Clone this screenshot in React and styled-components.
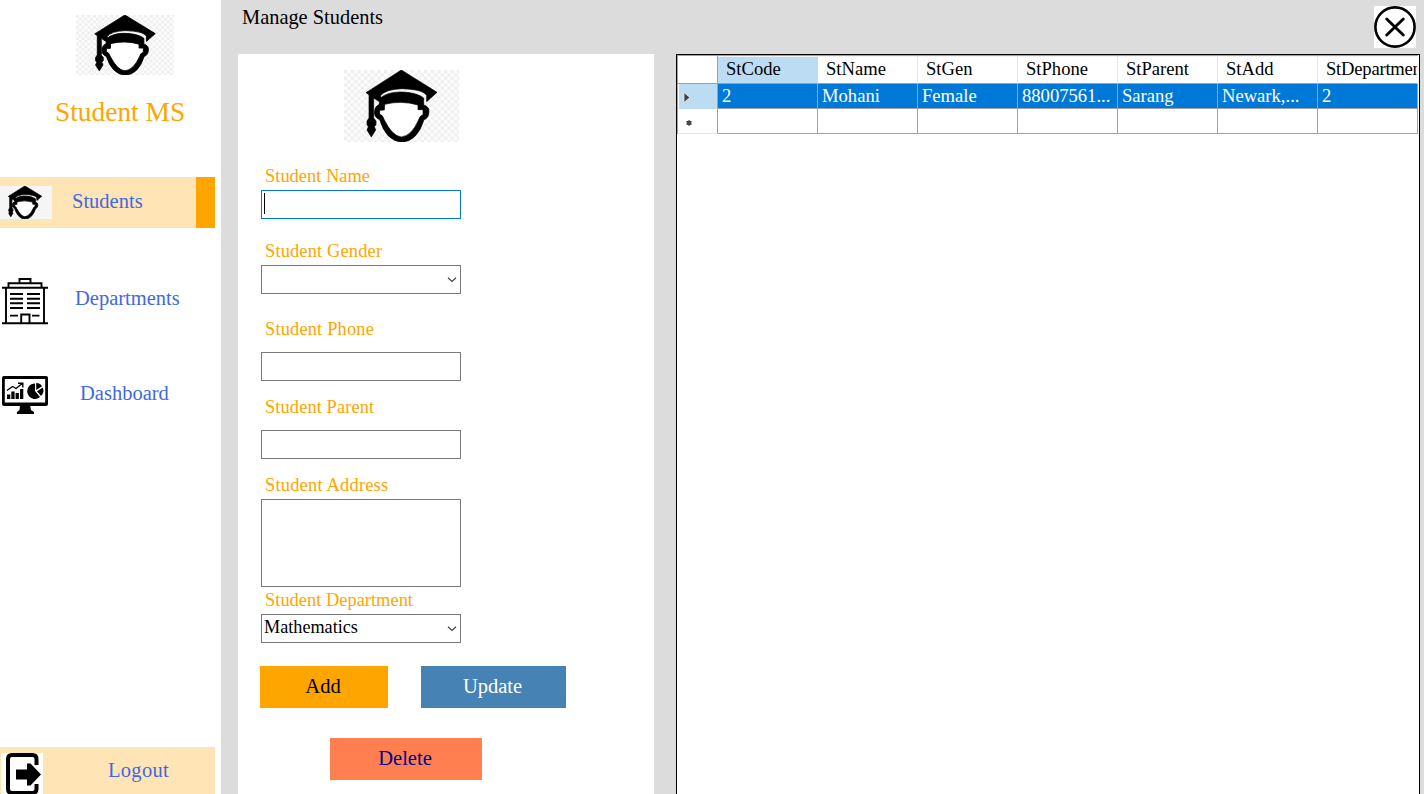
import React from 'react';
import styled, { createGlobalStyle } from 'styled-components';

const Global = createGlobalStyle`
  * { box-sizing: border-box; }
  html, body { margin: 0; padding: 0; overflow: hidden; }
  body { font-family: "Liberation Serif", "Times New Roman", serif; color: #000; }
`;

const Shell = styled.div`
  display: flex;
  width: 1424px;
  height: 794px;
  overflow: hidden;
  background: #dcdcdc;
`;

const Sidebar = styled.nav`
  display: flex;
  flex-direction: column;
  flex: none;
  width: 221px;
  background: #fff;
`;

const BrandIcon = styled.div`
  display: flex;
  margin: 15px 0 0 76px;
`;

const Brand = styled.h1`
  margin: 20px 0 0 55px;
  font-size: 27.4px;
  font-weight: 400;
  line-height: 34px;
  color: orange;
  white-space: nowrap;
`;

const NavItem = styled.a`
  display: flex;
  align-items: flex-start;
  width: 215px;
  height: ${p => p.$height}px;
  margin-top: ${p => p.$top}px;
  background: ${p => (p.$filled ? '#ffe4b5' : 'transparent')};
  border-right: ${p => (p.$active ? '19px solid orange' : 'none')};
`;

const NavIcon = styled.span`
  display: flex;
  flex: none;
  margin: ${p => p.$top}px 0 0 ${p => p.$left}px;
  width: ${p => p.$width}px;
`;

const NavText = styled.span`
  margin: ${p => p.$top}px 0 0 ${p => p.$gap}px;
  font-size: 20.5px;
  letter-spacing: ${p => p.$tracking || 0}px;
  line-height: 24px;
  color: #4169e1;
`;

const Spacer = styled.div`
  flex: 1;
`;

const Main = styled.main`
  display: flex;
  flex-direction: column;
  flex: 1;
  padding-left: 17px;
`;

const TopBar = styled.header`
  display: flex;
  justify-content: space-between;
  align-items: flex-start;
  flex: none;
  height: 54px;
  padding: 6px 8px 0 4px;
`;

const Title = styled.h2`
  margin: 0;
  font-size: 20.4px;
  font-weight: 400;
  line-height: 23px;
`;

const CloseButton = styled.button`
  display: flex;
  width: 42px;
  height: 42px;
  padding: 0;
  border: 0;
  background: #fff;
`;

const Content = styled.div`
  display: flex;
  flex: 1;
  gap: 22px;
`;

const FormPanel = styled.form`
  display: flex;
  flex-direction: column;
  width: 416px;
  flex: none;
  padding: 16px 0 0 23px;
  background: #fff;
`;

const FormIcon = styled.div`
  display: flex;
  margin: 0 0 4px 83px;
`;

const Label = styled.label`
  height: 20px;
  margin: ${p => p.$top}px 0 ${p => p.$gap}px 4px;
  font-size: 18.45px;
  letter-spacing: ${p => p.$tracking || 0}px;
  line-height: 20px;
  color: orange;
`;

const Field = styled.div`
  display: flex;
  justify-content: space-between;
  flex: none;
  width: 200px;
  height: ${p => p.$height || 29}px;
  padding: 2px 3px 2px 2px;
  border: 1px solid ${p => (p.$focus ? '#0078d7' : '#7a7a7a')};
  font-size: 18.2px;
  line-height: 20px;
`;

const Caret = styled.span`
  width: 1px;
  height: 21px;
  background: #000;
`;

const Buttons = styled.div`
  display: flex;
  gap: 33px;
  margin: ${p => p.$margin};
`;

const Button = styled.button`
  width: ${p => p.$width}px;
  height: 42px;
  padding: 0 2px 2px 0;
  border: 0;
  background: ${p => p.$bg};
  color: ${p => p.$color};
  font: 20.5px "Liberation Serif", "Times New Roman", serif;
`;

const GridPanel = styled.section`
  width: 744px;
  height: 760px;
  flex: none;
  border: 1px solid #000;
  background: #fff;
`;

const GridTable = styled.div`
  display: grid;
  grid-template-columns: 40px repeat(7, 100px);
  grid-template-rows: 28px 25px 25px;
  width: 741px;
  border-top: 1px solid #a0a0a0;
  border-left: 1px solid #a0a0a0;
  font-size: 18.6px;
`;

const HeadCell = styled.div`
  overflow: hidden;
  padding: 1px 0 0 8px;
  border-top: 1px solid #f4f4f4;
  border-right: ${p => (p.$last ? '1px solid #fff' : p.$selected ? '1px solid #bcdcf4' : '1px solid #e5e5e5')};
  border-bottom: 1px solid #a0a0a0;
  background: ${p => (p.$selected ? '#bcdcf4' : '#fff')};
  letter-spacing: ${p => (p.$last ? '-0.22px' : '0')};
  line-height: 22px;
  white-space: nowrap;
`;

const Corner = styled.div`
  border-right: 1px solid #a0a0a0;
  border-bottom: 1px solid #a0a0a0;
`;

const RowHead = styled.div`
  display: flex;
  padding: ${p => p.$pad};
  border-left: 1px solid #fff;
  border-right: 1px solid #a0a0a0;
  border-bottom: 1px solid ${p => (p.$selected ? '#bcdcf4' : '#e5e5e5')};
  background: ${p => (p.$selected ? '#bcdcf4' : '#fff')};
`;

const Cell = styled.div`
  padding: 1px 0 0 4px;
  border-right: 1px solid #a0a0a0;
  border-bottom: 1px solid #a0a0a0;
  background: ${p => (p.$selected ? '#0078d7' : '#fff')};
  color: #fff;
  line-height: 22px;
  white-space: nowrap;
`;

function GraduateIcon({ width, height, id, tile = 20, light, bold = 0, viewBox = '0 0 345 216' }) {
  const shade = light ? '#f1f1f1' : '#efefef';
  return (
    <svg width={width} height={height} viewBox={viewBox} preserveAspectRatio="none">
      <defs>
        <pattern id={id} width={tile} height={tile} patternUnits="userSpaceOnUse">
          <rect width={tile} height={tile} fill={light ? '#f9f9f9' : '#fdfdfd'} />
          <rect width={tile / 2} height={tile / 2} fill={shade} />
          <rect x={tile / 2} y={tile / 2} width={tile / 2} height={tile / 2} fill={shade} />
        </pattern>
      </defs>
      <rect width="345" height="216" fill={`url(#${id})`} />
      <path d="M122 103H222V119L237 120V134Q227 139 224 152Q205 200 172 201Q145 198 120 148Q117 136 107 133V121L122 120Z" fill="#fff" />
      <g stroke="#000" strokeWidth={bold}>
        <path d="M172 0L279 67L248 95V77Q240 58 174 56Q122 58 109 78L120 104L104 94L89 84V144L96 153V164L91 170L95 180L82 201L69 180L73 170L69 164V153L75 144V74L66 68Z" />
        <path d="M106 98L109 84Q132 65 174 66Q219 68 239 84V105Q256 110 255 125Q254 145 240 149Q219 216 172 216Q127 213 107 149Q91 143 91 125Q93 108 106 103ZM122 103L121 120L107 121V133Q116 134 120 148Q145 199 172 201Q203 198 224 149Q227 137 237 134V119H222V105Q172 90 122 103Z" fillRule="evenodd" />
      </g>
    </svg>
  );
}

function BuildingIcon() {
  return (
    <svg width="46" height="47" viewBox="0 0 46 47" fill="none" stroke="#000" strokeWidth="1.9">
      <path d="M17.5 5V1H28.5V5M6.5 9.5V5.3H39.5V9.5M0 9.8H46M4 10V45M42 10V45M0 45.3H46" />
      <path d="M8 16H21M25 16H38M8 20.7H21M25 20.7H38M8 25.3H21M25 25.3H38M8 30H21M25 30H38M8 37.6H16M30 37.6H37.5M19.2 45V36.5H27.5V45" />
    </svg>
  );
}

function DashboardIcon() {
  return (
    <svg width="46" height="38" viewBox="0 0 46 38">
      <rect x="0" y="0" width="46" height="30" rx="2" />
      <rect x="2.8" y="3" width="40.4" height="23.5" fill="#fff" />
      <path d="M18 29H28L29 34L32 36V38H15V36L17.5 34ZM5 18.5H8.3V23H5ZM9.3 15.5H12.6V23H9.3ZM13.6 17H16.9V23H13.6ZM18 13H21.3V23H18Z" />
      <path d="M5 14.5L10.5 10.5L14 12.5L20.3 7.5M16 7.3H20.8V11.5" fill="none" stroke="#000" strokeWidth="1.4" />
      <path d="M33 7.5V15L38 21A7.7 7.7 0 1 1 33 7.5Z" />
      <path d="M34.2 7A7 7 0 0 1 40 10.2L34.2 14ZM40.8 11.6A7.5 7.5 0 0 1 39 20L35 15.3Z" />
    </svg>
  );
}

function LogoutIcon() {
  return (
    <svg width="42" height="41" viewBox="0 0 42 41">
      <rect width="42" height="41" fill="#fff" />
      <path d="M35.5 12V6Q35.5 2 31.5 2H11Q7 2 7 6V36Q7 40 11 40H31.5Q35.5 40 35.5 36V31" fill="none" stroke="#000" strokeWidth="4" />
      <path d="M15 16.5H26V10.5H29.5L40 21.5L29.5 32.5H26V26.5H15Z" />
    </svg>
  );
}

function CloseIcon() {
  return (
    <svg width="42" height="42" viewBox="0 0 42 42" fill="none" stroke="#000">
      <circle cx="21" cy="21" r="19.6" strokeWidth="2.6" />
      <path d="M12.7 13L29.3 29M29.3 13L12.7 29" strokeWidth="2.9" strokeLinecap="round" />
    </svg>
  );
}

function ChevronIcon() {
  return (
    <svg width="10" height="23" viewBox="0 0 10 23" fill="none" stroke="#444" strokeWidth="1.2">
      <path d="M1 9.7L5 13.5L9 9.7" />
    </svg>
  );
}

const columns = ['StCode', 'StName', 'StGen', 'StPhone', 'StParent', 'StAdd', 'StDepartment'];
const student = ['2', 'Mohani', 'Female', '88007561...', 'Sarang', 'Newark,...', '2'];

export default function App() {
  return (
    <>
      <Global />
      <Shell>
        <Sidebar>
          <BrandIcon><GraduateIcon id="brand" width={98} height={60} bold={3} /></BrandIcon>
          <Brand>Student MS</Brand>
          <NavItem $height={51} $top={48} $filled $active>
            <NavIcon $top={9} $left={0} $width={52}><GraduateIcon id="nav" width={52} height={33} light bold={5} viewBox="13 0 332 216" /></NavIcon>
            <NavText $top={12} $gap={20}>Students</NavText>
          </NavItem>
          <NavItem $height={50} $top={50}>
            <NavIcon $top={0} $left={2} $width={46}><BuildingIcon /></NavIcon>
            <NavText $top={8} $gap={27}>Departments</NavText>
          </NavItem>
          <NavItem $height={42} $top={48}>
            <NavIcon $top={0} $left={2} $width={46}><DashboardIcon /></NavIcon>
            <NavText $top={5} $gap={32}>Dashboard</NavText>
          </NavItem>
          <Spacer />
          <NavItem $height={47} $top={0} $filled>
            <NavIcon $top={6} $left={1} $width={42}><LogoutIcon /></NavIcon>
            <NavText $top={11} $gap={65} $tracking={0.3}>Logout</NavText>
          </NavItem>
        </Sidebar>
        <Main>
          <TopBar>
            <Title>Manage Students</Title>
            <CloseButton type="button" aria-label="Close"><CloseIcon /></CloseButton>
          </TopBar>
          <Content>
            <FormPanel>
              <FormIcon><GraduateIcon id="form" width={115} height={72} bold={2} /></FormIcon>
              <Label $top={20} $gap={4}>Student Name</Label>
              <Field $focus><Caret /></Field>
              <Label $top={22} $gap={4} $tracking={0.14}>Student Gender</Label>
              <Field><span /><ChevronIcon /></Field>
              <Label $top={25} $gap={13} $tracking={0.15}>Student Phone</Label>
              <Field />
              <Label $top={16} $gap={13} $tracking={0.08}>Student Parent</Label>
              <Field />
              <Label $top={16} $gap={4} $tracking={0.2}>Student Address</Label>
              <Field $height={88} />
              <Label $top={3} $gap={4}>Student Department</Label>
              <Field><span>Mathematics</span><ChevronIcon /></Field>
              <Buttons $margin="23px 0 0 -1px">
                <Button type="button" $width={128} $bg="#ffa500" $color="#000">Add</Button>
                <Button type="button" $width={145} $bg="#4682b4" $color="#fff">Update</Button>
              </Buttons>
              <Buttons $margin="30px 0 0 69px">
                <Button type="button" $width={152} $bg="#ff7f50" $color="#00008b">Delete</Button>
              </Buttons>
            </FormPanel>
            <GridPanel>
              <GridTable>
                <Corner />
                {columns.map((name, i) => (
                  <HeadCell key={name} $selected={i === 0} $last={i === 6}>{name}</HeadCell>
                ))}
                <RowHead $selected $pad="8px 0 0 4px">
                  <svg width="8" height="11" viewBox="0 0 8 11"><path d="M1 .5L6.8 5.5L1 10.5Z" fill="#444" stroke="#fff" strokeWidth=".6" /></svg>
                </RowHead>
                {student.map((value, i) => <Cell key={columns[i]} $selected>{value}</Cell>)}
                <RowHead $pad="11px 0 0 7px">
                  <svg width="6" height="6" viewBox="0 0 6 6"><circle cx="3" cy="3" r="2.4" fill="#333" /><path d="M3 0V6M0 1.5L6 4.5M0 4.5L6 1.5" stroke="#555" strokeWidth=".7" /></svg>
                </RowHead>
                {columns.map(name => <Cell key={name} />)}
              </GridTable>
            </GridPanel>
          </Content>
        </Main>
      </Shell>
    </>
  );
}
